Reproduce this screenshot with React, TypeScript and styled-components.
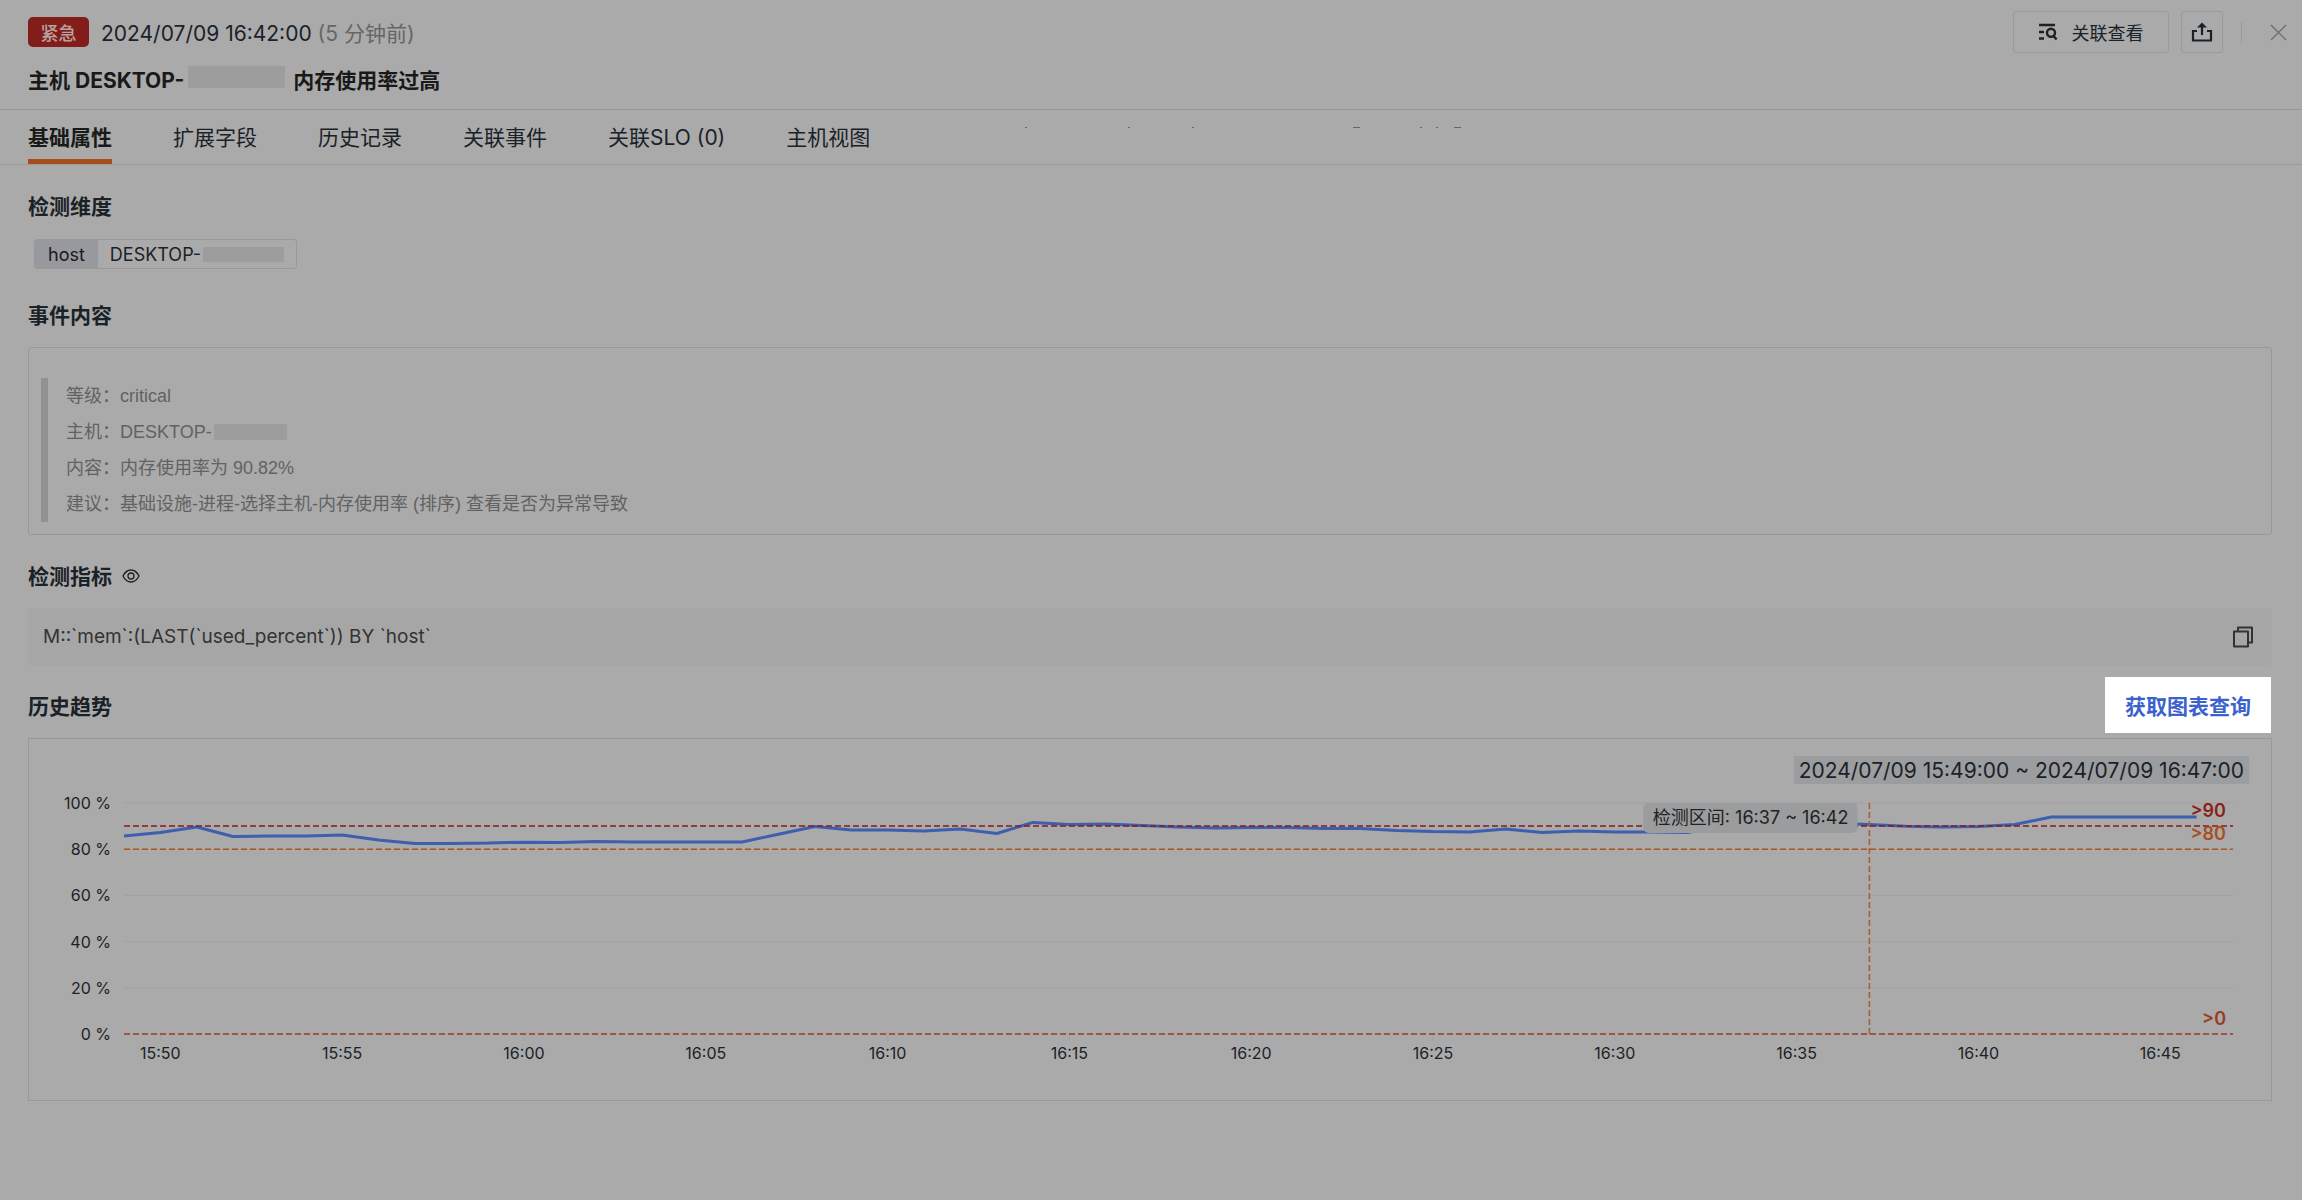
import React from "react";
import styled, { createGlobalStyle } from "styled-components";

const Global = createGlobalStyle`
  * { box-sizing: border-box; }
  body {
    margin: 0;
    background: #aaaaaa;
    color: #1a2228;
    font-family: Inter, "Noto Sans CJK SC", sans-serif;
    font-size: 18px;
  }
  h1, h2, p, blockquote { margin: 0; }
  button { font: inherit; color: inherit; background: none; border: 0; padding: 0; cursor: pointer; }
`;

const Page = styled.div`
  display: flex;
  flex-direction: column;
  min-height: 100vh;
`;

const Header = styled.header`
  display: flex;
  justify-content: space-between;
  align-items: flex-start;
  padding: 11px 15px 0 28px;
  height: 110px;
  border-bottom: 1px solid #98989b;
`;

const Heading = styled.div`
  display: flex;
  flex-direction: column;
  gap: 11px;
`;

const Meta = styled.div`
  display: flex;
  align-items: center;
  height: 42px;
  gap: 12px;
  font-size: 21px;
`;

const Badge = styled.span`
  display: flex;
  align-items: center;
  justify-content: center;
  width: 61px;
  height: 30px;
  border-radius: 5px;
  background: #821d19;
  color: #b9a3a2;
  font-size: 18px;
  font-weight: 500;
`;

const Ago = styled.span`
  color: #666666;
`;

const Title = styled.h1`
  display: flex;
  align-items: center;
  height: 30px;
  color: #191919;
  font-size: 21px;
  font-weight: 700;
`;

const Mask = styled.span<{ $w: number; $h: number }>`
  display: inline-block;
  width: ${(p) => p.$w}px;
  height: ${(p) => p.$h}px;
  margin-left: 2px;
  background: #9d9d9d;
`;

const TitleMask = styled(Mask)`
  margin: 0 8px 4px 4px;
`;

const Actions = styled.div`
  display: flex;
  align-items: center;
`;

const ActionButton = styled.button<{ $icon?: boolean }>`
  && {
    display: flex;
    align-items: center;
    justify-content: center;
    gap: 14px;
    width: ${(p) => (p.$icon ? 42 : 156)}px;
    height: 42px;
    margin-right: ${(p) => (p.$icon ? 18 : 12)}px;
    border: 1px solid #999999;
    border-radius: 3px;
  }
`;

const Divider = styled.span`
  width: 1px;
  height: 21px;
  background: #989898;
`;

const CloseButton = styled.button`
  && {
    display: flex;
    margin-left: 28px;
    color: #6f6f6f;
  }
`;

const Tabs = styled.nav`
  display: flex;
  gap: 61px;
  height: 55px;
  padding: 0 28px;
  border-bottom: 1px solid #98989d;
`;

const Tab = styled.button<{ $active?: boolean }>`
  && {
    height: 54px;
    border-top: 2px solid transparent;
    border-bottom: 5px solid ${(p) => (p.$active ? "#a54d1b" : "transparent")};
    font-size: 21px;
    font-weight: ${(p) => (p.$active ? 700 : 400)};
    color: ${(p) => (p.$active ? "#191919" : "#1a2228")};
    white-space: nowrap;
  }
`;

const Specks = styled.svg`
  margin: 17px 0 0 94px;
`;

const Content = styled.main`
  padding: 0 30px 0 28px;
`;

const Section = styled.section`
  padding-top: 12px;
`;

const SectionHead = styled.div`
  display: flex;
  align-items: center;
  justify-content: space-between;
  height: 56px;
  margin-bottom: 5px;
`;

const SectionTitle = styled.h2`
  display: flex;
  align-items: center;
  gap: 10px;
  font-size: 21px;
  font-weight: 700;
`;

const Tag = styled.div`
  display: flex;
  width: fit-content;
  height: 30px;
  margin: 6px 0 5px 6px;
  border: 1px solid #98989b;
  border-radius: 3px;
`;

const TagKey = styled.span`
  display: flex;
  align-items: center;
  padding: 0 13px;
  background: #98989f;
  color: #191919;
`;

const TagValue = styled.span`
  display: flex;
  align-items: center;
  padding: 0 12px;
`;

const EventBox = styled.div`
  padding: 30px 12px 12px;
  border: 1px solid #989898;
  border-radius: 3px;
`;

const Quote = styled.blockquote`
  padding-left: 18px;
  border-left: 7px solid #929292;
  color: #626262;
  font-family: "Liberation Sans", "Noto Sans CJK SC", sans-serif;
  line-height: 36px;
`;

const QuoteLine = styled.p`
  display: flex;
  align-items: center;
  height: 36px;
`;

const QueryBox = styled.div`
  display: flex;
  align-items: center;
  justify-content: space-between;
  height: 57px;
  padding: 0 18px 0 15px;
  border-radius: 3px;
  background: #a6a6a6;
  color: #333333;
  font-size: 19px;
`;

const IconButton = styled.button`
  display: flex;
`;

const QueryLink = styled.a`
  display: flex;
  align-items: center;
  height: 56px;
  padding: 0 20px;
  margin-right: 1px;
  background: #ffffff;
  color: #3b62cc;
  font-size: 21px;
  font-weight: 600;
  text-decoration: none;
`;

const ChartBox = styled.div`
  display: flex;
  flex-direction: column;
  height: 363px;
  padding: 17px 22px 0;
  border: 1px solid #98989b;
`;

const Range = styled.div`
  align-self: flex-end;
  display: flex;
  align-items: center;
  height: 28px;
  padding: 0 5px;
  background: #9b9d9f;
  font-size: 21px;
`;

const Plot = styled.div`
  flex: 1;
  padding: 19px 16px 0 73px;
`;

const Canvas = styled.div`
  position: relative;
  height: 231px;
`;

const ChartSvg = styled.svg`
  display: block;
  width: 100%;
  height: 100%;
  overflow: visible;
`;

const TickLabel = styled.span<{ $side: "x" | "y" }>`
  position: absolute;
  font-size: 16px;
  line-height: 20px;
  white-space: nowrap;
  transform: ${(p) => (p.$side === "x" ? "translateX(-50%)" : "translateY(-50%)")};
`;

const Threshold = styled.span`
  position: absolute;
  right: 7px;
  font-size: 18px;
  font-weight: 600;
  line-height: 20px;
`;

const WindowTip = styled.div`
  position: absolute;
  top: 0;
  display: flex;
  align-items: center;
  height: 30px;
  padding: 0 9px;
  border-radius: 5px;
  background: #9b9c9d;
  color: #222222;
  line-height: 28px;
  transform: translateX(-100%);
  white-space: nowrap;
`;

const TOTAL = 58;
const values = [
  85.7, 87.2, 89.6, 85.5, 85.7, 85.7, 86.1, 84, 82.5, 82.5, 82.7, 83, 82.9, 83.3, 83.1, 83.1, 83.1, 83.1,
  86.5, 89.8, 88.3, 88.3, 87.9, 88.7, 86.8, 91.6, 90.7, 90.9, 90.3, 89.6, 89.2, 89.4, 89.4, 89, 89,
  88.1, 87.7, 87.4, 88.7, 87.2, 87.9, 87.4, 87.4, 87.2, 90.5, 91, 91, 91.2, 90.7, 89.9, 89.6, 89.8, 90.7,
  93.9, 93.9, 93.9, 93.9, 93.9,
];
const xTicks = Array.from({ length: 12 }, (_, i) => {
  const m = 50 + i * 5;
  return { at: 1 + i * 5, label: `${m < 60 ? 15 : 16}:${String(m % 60).padStart(2, "0")}` };
});
const yTicks = [100, 80, 60, 40, 20, 0];
const limits = [
  { v: 90, line: "#8a1a1a", text: "#8a1f1a" },
  { v: 80, line: "#aa5522", text: "#a84e20" },
  { v: 0, line: "#a03a20", text: "#9a3a22" },
];
const pct = (m: number) => `${(m / TOTAL) * 100}%`;

function TrendChart() {
  return (
    <Plot>
      <Canvas>
        <ChartSvg viewBox={`0 0 ${TOTAL} 100`} preserveAspectRatio="none" role="img" aria-label="内存使用率历史趋势">
          {yTicks.map((v) => (
            <line key={v} x1={0} x2={TOTAL} y1={100 - v} y2={100 - v} stroke="#a1a1a1" vectorEffect="non-scaling-stroke" />
          ))}
          {xTicks.map((t) => (
            <line key={t.at} x1={t.at} x2={t.at} y1={100} y2={103} stroke="#a1a1a1" vectorEffect="non-scaling-stroke" />
          ))}
          <polyline
            points={values.map((v, i) => `${i},${100 - v}`).join(" ")}
            fill="none"
            stroke="#3d5fae"
            strokeWidth={3}
            strokeLinejoin="bevel"
            vectorEffect="non-scaling-stroke"
          />
          {limits.map((l) => (
            <line
              key={l.v}
              x1={0}
              x2={TOTAL}
              y1={100 - l.v}
              y2={100 - l.v}
              stroke={l.line}
              strokeWidth={1.5}
              strokeDasharray="6 3"
              vectorEffect="non-scaling-stroke"
            />
          ))}
          <line
            x1={48}
            x2={48}
            y1={0}
            y2={100}
            stroke="#a85c33"
            strokeWidth={1.5}
            strokeDasharray="6 3"
            vectorEffect="non-scaling-stroke"
          />
        </ChartSvg>
        {yTicks.map((v) => (
          <TickLabel key={v} $side="y" style={{ top: `${100 - v}%`, right: "calc(100% + 13px)" }}>
            {v} %
          </TickLabel>
        ))}
        {xTicks.map((t) => (
          <TickLabel key={t.at} $side="x" style={{ left: pct(t.at), top: "calc(100% + 9px)" }}>
            {t.label}
          </TickLabel>
        ))}
        {limits.map((l) => (
          <Threshold key={l.v} style={{ bottom: `calc(${l.v}% + 5px)`, color: l.text }}>
            &gt;{l.v}
          </Threshold>
        ))}
        <WindowTip style={{ left: `calc(${pct(48)} - 12px)` }}>检测区间: 16:37 ~ 16:42</WindowTip>
      </Canvas>
    </Plot>
  );
}

const tabs = ["基础属性", "扩展字段", "历史记录", "关联事件", "关联SLO (0)", "主机视图"];

export default function App() {
  return (
    <Page>
      <Global />
      <Header>
        <Heading>
          <Meta>
            <Badge>紧急</Badge>
            <span>
              2024/07/09 16:42:00 <Ago>(5 分钟前)</Ago>
            </span>
          </Meta>
          <Title>
            主机 DESKTOP-
            <TitleMask $w={97} $h={22} />
            内存使用率过高
          </Title>
        </Heading>
        <Actions>
          <ActionButton type="button">
            <svg width="19" height="18" viewBox="0 0 19 18" fill="none" stroke="currentColor" strokeWidth="2.4" aria-hidden="true">
              <path d="M0 2h16M0 9h5M0 15.5h5" />
              <circle cx="12" cy="9.8" r="4" />
              <path d="M14.6 13l3 3.6" />
            </svg>
            关联查看
          </ActionButton>
          <ActionButton type="button" $icon aria-label="分享">
            <svg width="22" height="20" viewBox="0 0 22 20" fill="none" stroke="currentColor" strokeWidth="2.2" aria-hidden="true">
              <path d="M6 9H2v9.500h18V9h-4M11 13V3" />
              <path d="M6 5.500L11 .5l5 5z" fill="currentColor" stroke="none" />
            </svg>
          </ActionButton>
          <Divider />
          <CloseButton type="button" aria-label="关闭">
            <svg width="17" height="17" viewBox="0 0 17 17" fill="none" stroke="currentColor" strokeWidth="1.4" aria-hidden="true">
              <path d="M1 1l15 15M16 1L1 16" />
            </svg>
          </CloseButton>
        </Actions>
      </Header>
      <Tabs>
        {tabs.map((t, i) => (
          <Tab key={t} type="button" $active={i === 0}>
            {t}
          </Tab>
        ))}
        <Specks width="440" height="2" aria-hidden="true" fill="#666666">
          <path d="M0 0h2v1H0zM103 0h2v1h-2zM167 0h2v1h-2zM328 0h7v1h-7zM395 0h2v1h-2zM411 0h2v1h-2zM429 0h7v1h-7z" />
        </Specks>
      </Tabs>
      <Content>
        <Section>
          <SectionHead>
            <SectionTitle>检测维度</SectionTitle>
          </SectionHead>
          <Tag>
            <TagKey>host</TagKey>
            <TagValue>
              DESKTOP-
              <Mask $w={81} $h={15} />
            </TagValue>
          </Tag>
        </Section>
        <Section>
          <SectionHead>
            <SectionTitle>事件内容</SectionTitle>
          </SectionHead>
          <EventBox>
            <Quote>
              <QuoteLine>等级：critical</QuoteLine>
              <QuoteLine>
                主机：DESKTOP-
                <Mask $w={73} $h={16} />
              </QuoteLine>
              <QuoteLine>内容：内存使用率为 90.82%</QuoteLine>
              <QuoteLine>建议：基础设施-进程-选择主机-内存使用率 (排序) 查看是否为异常导致</QuoteLine>
            </Quote>
          </EventBox>
        </Section>
        <Section>
          <SectionHead>
            <SectionTitle>
              检测指标
              <svg width="18" height="16" viewBox="0 0 18 16" fill="none" stroke="currentColor" strokeWidth="1.300" aria-hidden="true">
                <path d="M1 9Q4 3 9 3t8 6q-3 6-8 6T1 9z" />
                <circle cx="9" cy="9" r="3" />
              </svg>
            </SectionTitle>
          </SectionHead>
          <QueryBox>
            <span>M::`mem`:(LAST(`used_percent`)) BY `host`</span>
            <IconButton type="button" aria-label="复制">
              <svg width="22" height="22" viewBox="0 0 22 22" fill="none" stroke="currentColor" strokeWidth="2" strokeLinejoin="round" aria-hidden="true">
                <path d="M2 5.500h14v15H2z" />
                <path d="M6 5V1.500h14v15h-3.500" />
              </svg>
            </IconButton>
          </QueryBox>
        </Section>
        <Section>
          <SectionHead>
            <SectionTitle>历史趋势</SectionTitle>
            <QueryLink href="#">获取图表查询</QueryLink>
          </SectionHead>
          <ChartBox>
            <Range>2024/07/09 15:49:00 ~ 2024/07/09 16:47:00</Range>
            <TrendChart />
          </ChartBox>
        </Section>
      </Content>
    </Page>
  );
}
